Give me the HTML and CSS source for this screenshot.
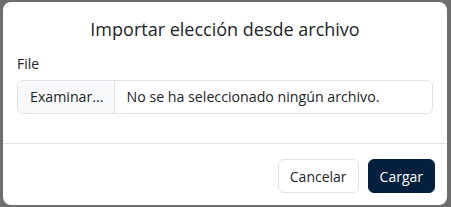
FILE: index.html
```html
<!DOCTYPE html>
<html>
<head>
  <meta charset='utf-8'>
  <title>Importar elección</title>
  <link rel="stylesheet" href="styles.css">
</head>
<body>
  <div class="backdrop">
    <div class="modal">
      <div class="modal-header">
        <h5 class="modal-title">Importar elección desde archivo</h5>
      </div>
      <div class="modal-body">
        <label class="form-label">File</label>
        <div class="file-input">
          <span class="file-button">Examinar...</span>
          <span class="file-name">No se ha seleccionado ningún archivo.</span>
        </div>
      </div>
      <div class="modal-footer">
        <button class="btn btn-outline">Cancelar</button>
        <button class="btn btn-primary">Cargar</button>
      </div>
    </div>
  </div>
</body>
</html>
```

FILE: styles.css
```css
html, body {
  height: 100%;
  margin: 0;
}

body {
  background-color: #6e6e6e;
  color: #212529;
  font-family: "Open Sans", Arial, sans-serif;
  font-size: 14px;
}

.backdrop {
  padding: 2px 4px 2px 3px;
}

.modal {
  background: #fff;
  border-radius: 8px;
  height: 203px;
  display: flex;
  flex-direction: column;
}

.modal-header {
  padding: 14px 14px 0;
  text-align: center;
}

.modal-title {
  margin: 0;
  font-size: 18px;
  font-weight: 400;
  line-height: 26px;
  color: #212529;
}

.modal-body {
  padding: 12px 14px 0;
  height: 102px;
  flex-shrink: 0;
  box-sizing: border-box;
  border-bottom: 1px solid #dee2e6;
}

.form-label {
  display: block;
  line-height: 20px;
  margin-bottom: 6px;
}

.file-input {
  display: flex;
  height: 34px;
  border: 1px solid #dee2e6;
  border-radius: 6px;
  box-sizing: border-box;
  overflow: hidden;
  font-size: 14.2px;
}

.file-button {
  background: #f8f9fa;
  border-right: 1px solid #dee2e6;
  padding: 0 11px 0 12px;
  line-height: 32px;
}

.file-name {
  padding: 0 11px;
  line-height: 32px;
}

.modal-footer {
  display: flex;
  justify-content: flex-end;
  gap: 9px;
  padding: 15px 12px 0;
}

.btn {
  font-family: "Open Sans", Arial, sans-serif;
  font-size: 14px;
  height: 34px;
  padding: 0 11px;
  border-radius: 6px;
  cursor: pointer;
}

.btn-outline {
  background: #fff;
  color: #212529;
  border: 1px solid #dee2e6;
}

.btn-primary {
  background: #03213f;
  color: #fff;
  border: 1px solid #03213f;
}
```
